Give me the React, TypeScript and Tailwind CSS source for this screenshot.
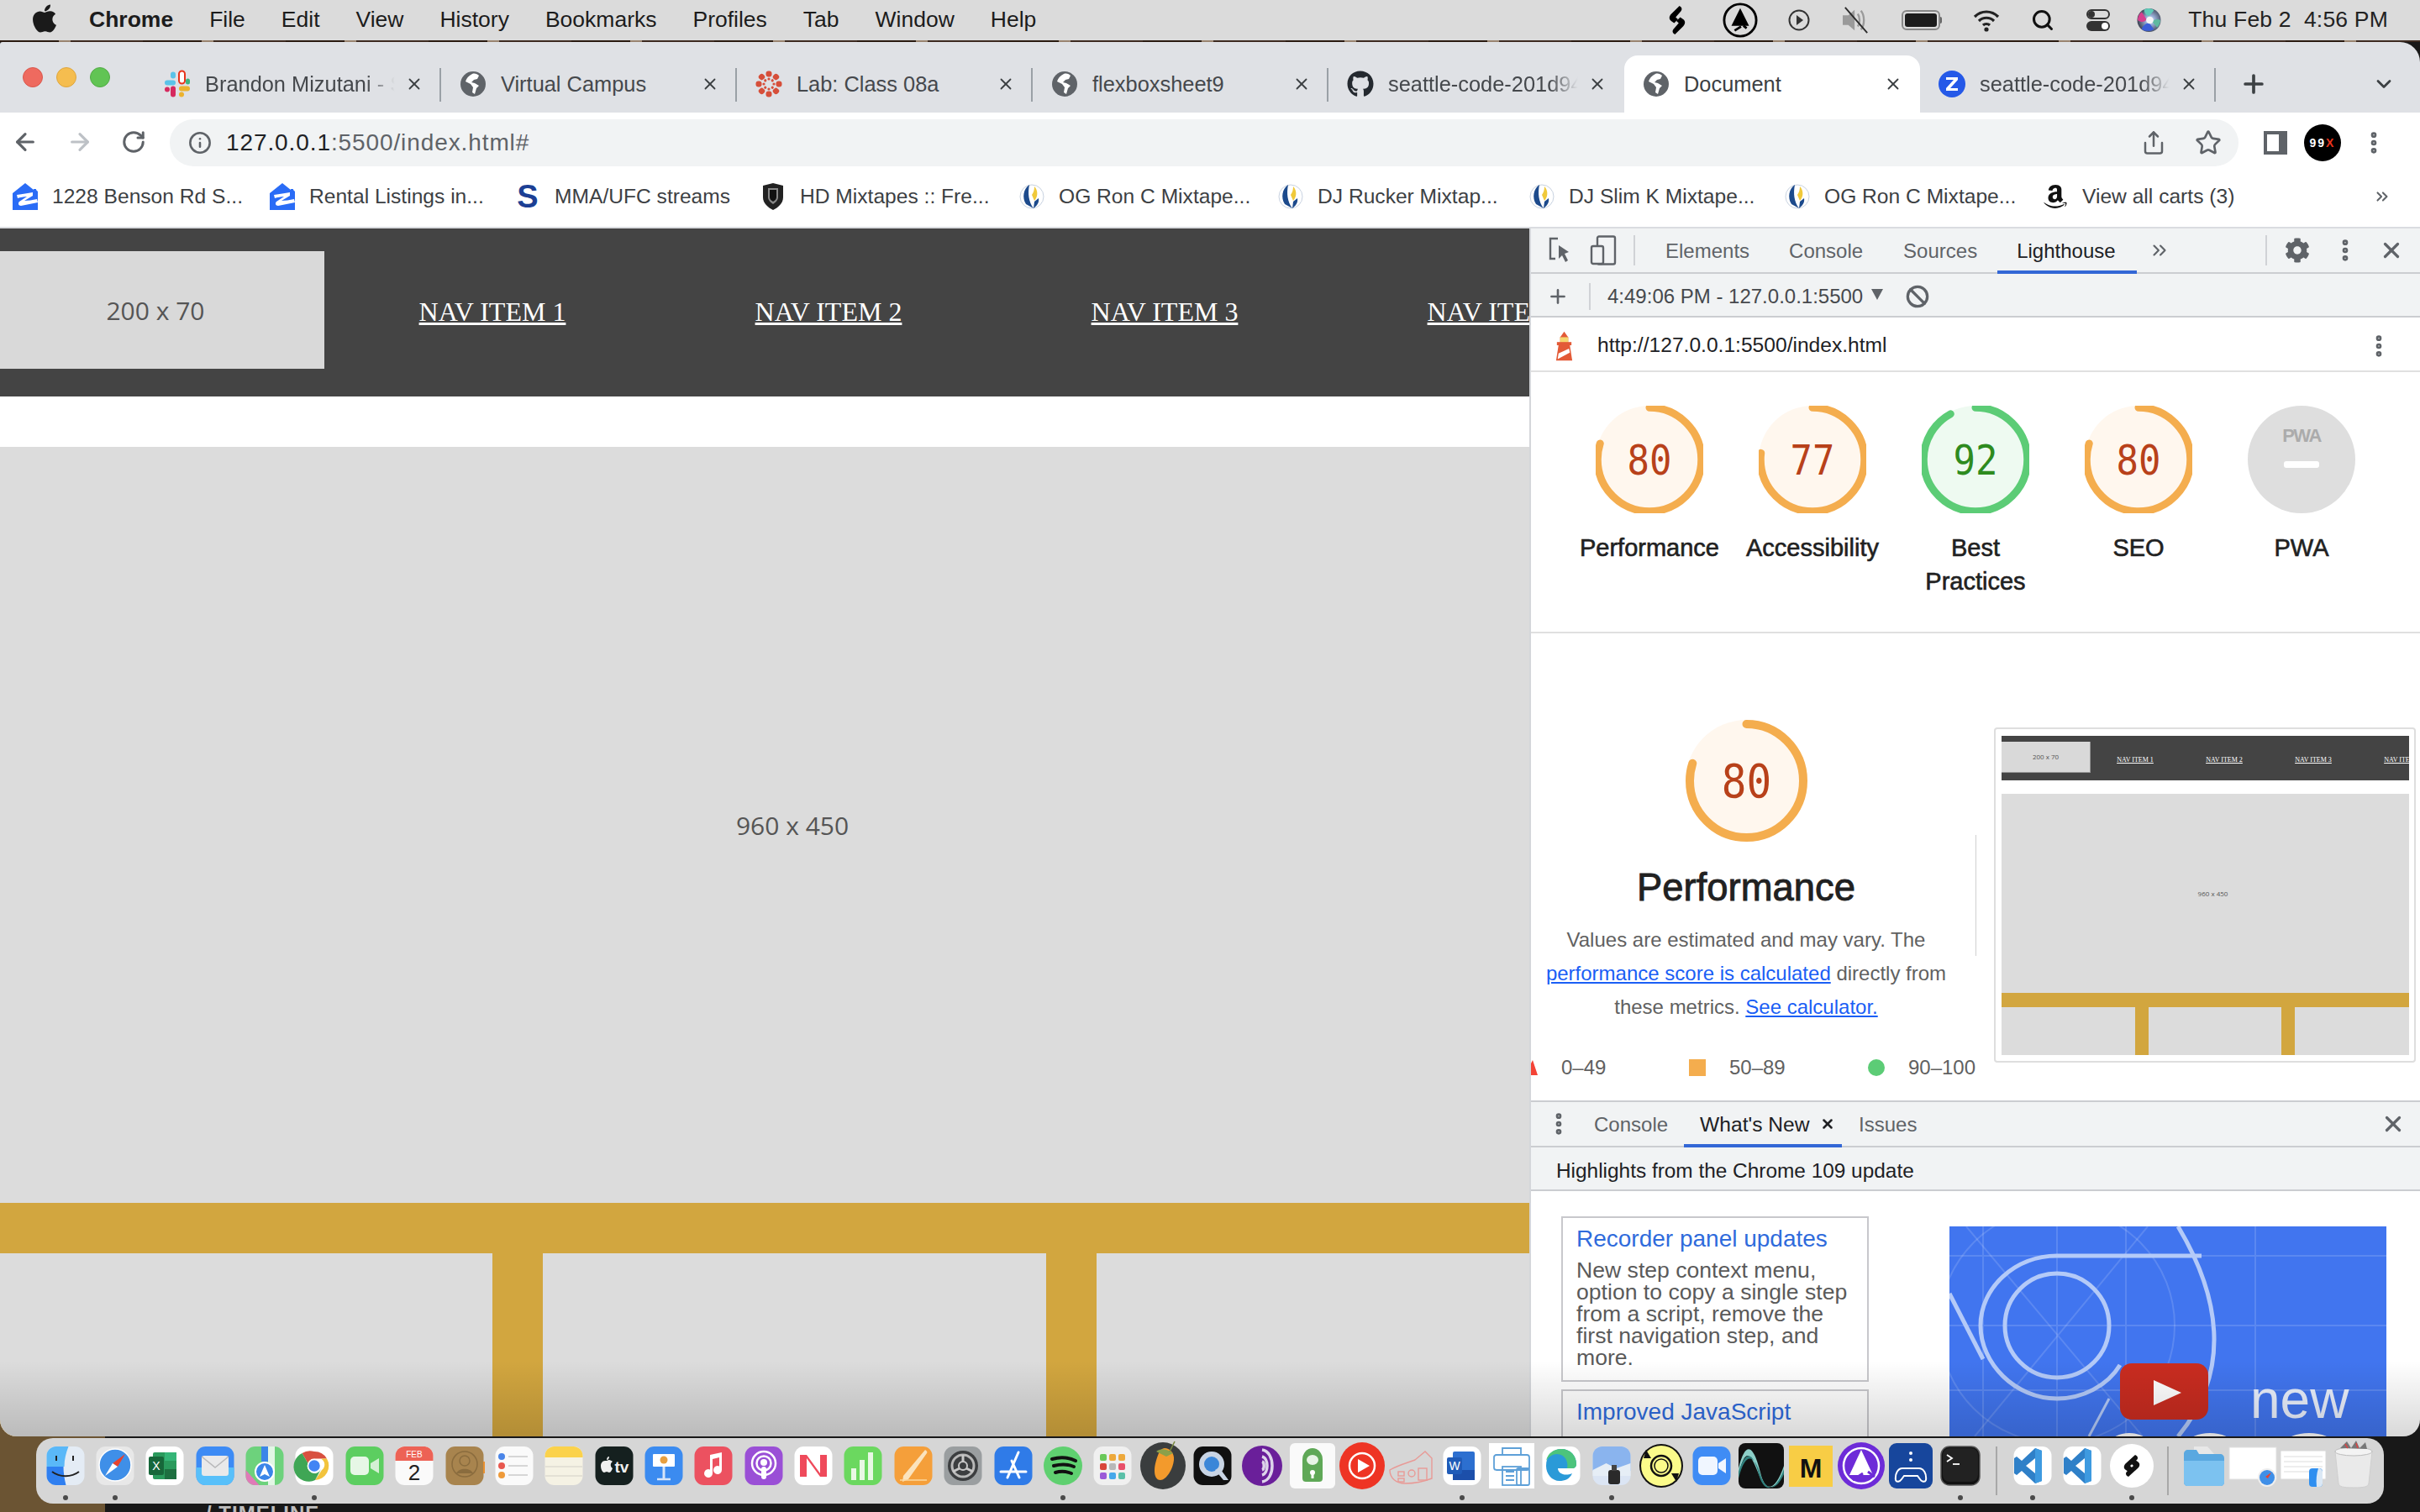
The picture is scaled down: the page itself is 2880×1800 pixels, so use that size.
import { ReactNode } from "react";
import { FaApple, FaGithub, FaAmazon, FaCog } from "react-icons/fa";
import { ArrowLeft, ArrowRight, RotateCw, Info, Share, Star, Search, X, Plus, ChevronDown, ChevronsRight, Ban, EllipsisVertical } from "lucide-react";

const sans = "font-['Liberation_Sans',Arial,sans-serif]";

function Globe() {
  return (
    <svg viewBox="0 0 32 32" className="w-[32px] h-[32px] shrink-0">
      <circle cx="16" cy="16" r="15" fill="#5f6368" />
      <path d="M15 4c-4 2-7 5-8 9l6 3 3 4-1 6 3 2 2-7 3-3-5-3-4-1 3-3 4-1 2-4c-2-2-5-3-8-2z" fill="#fff" />
    </svg>
  );
}

function Slack() {
  return (
    <svg viewBox="0 0 32 32" className="w-[32px] h-[33px] shrink-0">
      <rect x="1" y="12" width="13" height="6" rx="3" fill="#5bc3e8" />
      <rect x="8" y="2" width="6" height="8" rx="3" fill="#5bc3e8" />
      <rect x="18" y="1" width="7" height="15" rx="3.5" fill="#fff" stroke="#e8341c" strokeWidth="2" />
      <rect x="26" y="10" width="5" height="7" rx="2.5" fill="#3fb37f" />
      <rect x="1" y="20" width="6" height="6" rx="3" fill="#d62a5f" />
      <rect x="8" y="19" width="6" height="13" rx="3" fill="#d62a5f" />
      <rect x="18" y="19" width="13" height="6" rx="3" fill="#ecb22e" />
      <rect x="18" y="26" width="6" height="6" rx="3" fill="#ecb22e" />
    </svg>
  );
}

function CanvasIcon() {
  const dots = [0, 45, 90, 135, 180, 225, 270, 315];
  return (
    <svg viewBox="0 0 32 32" className="w-[32px] h-[32px] shrink-0">
      {dots.map((a) => (
        <g key={a} transform={`rotate(${a} 16 16)`}>
          <rect x="12.5" y="0.5" width="7" height="7" rx="3" fill="#d64f3a" />
          <circle cx="16" cy="10" r="1.6" fill="#d64f3a" />
        </g>
      ))}
    </svg>
  );
}

function ZoomFav() {
  return (
    <svg viewBox="0 0 32 32" className="w-[32px] h-[32px] shrink-0">
      <circle cx="16" cy="16" r="16" fill="#2559e8" />
      <path d="M9 8h14v3L14 21h9v3H9v-3l9-10H9z" fill="#fff" />
    </svg>
  );
}

function Zillow() {
  return (
    <svg viewBox="0 0 30 32" className="w-[30px] h-[32px]">
      <path d="M15 0l10 8v-1h3v1l2 2v22H0V12z" fill="#2a6cf6" />
      <path d="M5 14c7-1 13-2 19-3v4l-10 6c4 0 10-1 15-2l1 4-20 4c-3 0-4-3-2-5l9-6c-4 0-8 1-11 2z" fill="#fff" />
    </svg>
  );
}

function SBadge() {
  return <span className="w-[30px] text-center text-[38px] leading-none font-black text-[#1c3f94] font-['Liberation_Sans',sans-serif]">S</span>;
}

function Shield() {
  return (
    <svg viewBox="0 0 30 32" className="w-[30px] h-[32px]">
      <path d="M15 0l12 3v14c0 7-6 12-12 15C9 29 3 24 3 17V3z" fill="#222" />
      <path d="M9 6h12v11c0 3-3 6-6 8-3-2-6-5-6-8z" fill="#888" />
      <path d="M11 8h8v9c0 2-2 4-4 5-2-1-4-3-4-5z" fill="#111" />
    </svg>
  );
}

function Mixtape() {
  return (
    <svg viewBox="0 0 30 32" className="w-[30px] h-[32px]">
      <circle cx="15" cy="16" r="14" fill="#fff" stroke="#c8d2e0" />
      <path d="M12 2C5 7 3 17 8 25l9 5c-6-8-7-18-5-28z" fill="#1c4a8c" />
      <path d="M18 4c5 5 4 13 0 17l-3-7c2-3 3-6 3-10z" fill="#f0c93a" />
      <path d="M23 18c1 5-2 9-6 12l1-8z" fill="#1c4a8c" />
    </svg>
  );
}

const tabs: { icon: ReactNode; label: string; active?: boolean; fade?: boolean }[] = [
  { icon: <Slack />, label: "Brandon Mizutani - Slack", fade: true },
  { icon: <Globe />, label: "Virtual Campus" },
  { icon: <CanvasIcon />, label: "Lab: Class 08a" },
  { icon: <Globe />, label: "flexboxsheet9" },
  { icon: <FaGithub className="w-[32px] h-[32px] shrink-0 text-[#24292f]" />, label: "seattle-code-201d94-lab", fade: true },
  { icon: <Globe />, label: "Document", active: true },
  { icon: <ZoomFav />, label: "seattle-code-201d94-lab", fade: true },
];

const bookmarks: { icon: ReactNode; label: string; width: string }[] = [
  { icon: <Zillow />, label: "1228 Benson Rd S...", width: "w-[306px]" },
  { icon: <Zillow />, label: "Rental Listings in...", width: "w-[292px]" },
  { icon: <SBadge />, label: "MMA/UFC streams", width: "w-[292px]" },
  { icon: <Shield />, label: "HD Mixtapes :: Fre...", width: "w-[308px]" },
  { icon: <Mixtape />, label: "OG Ron C Mixtape...", width: "w-[308px]" },
  { icon: <Mixtape />, label: "DJ Rucker Mixtap...", width: "w-[299px]" },
  { icon: <Mixtape />, label: "DJ Slim K Mixtape...", width: "w-[304px]" },
  { icon: <Mixtape />, label: "OG Ron C Mixtape...", width: "w-[307px]" },
  { icon: <FaAmazon className="w-[30px] h-[32px] text-[#111]" />, label: "View all carts (3)", width: "w-[300px]" },
];

function MenuBar() {
  const items = ["File", "Edit", "View", "History", "Bookmarks", "Profiles", "Tab", "Window", "Help"];
  return (
    <div className={`h-[48px] bg-[#dbdbdb] flex items-center text-[26.5px] text-[#1c1c1c] ${sans}`}>
      <FaApple className="w-[34px] h-[38px] ml-[36px] mr-[36px] -mt-[4px] text-[#1a1a1a]" />
      <span className="font-bold mr-[43px]">Chrome</span>
      <div className="flex gap-[43px]">
        {items.map((m) => (
          <span key={m}>{m}</span>
        ))}
      </div>
      <div className="ml-auto flex items-center">
        <svg viewBox="0 0 30 40" className="w-[30px] h-[36px] mr-[39px]">
          <path d="M18 1L7 12c-3 3-3 7 0 9l4 3 5-5-3-3 7-8c2-3 1-5-2-7zM12 39l11-11c3-3 3-7 0-9l-4-3-5 5 3 3-7 8c-2 3-1 5 2 7z" fill="#000" />
        </svg>
        <svg viewBox="0 0 44 44" className="w-[42px] h-[42px] mr-[36px]">
          <circle cx="22" cy="22" r="20" fill="none" stroke="#000" strokeWidth="3" />
          <path d="M22 7l11 22H11z" fill="#000" />
          <path d="M15 35l8-5M30 32l-4-3" stroke="#000" strokeWidth="3" />
        </svg>
        <svg viewBox="0 0 26 26" className="w-[26px] h-[26px] mr-[36px]">
          <circle cx="13" cy="13" r="11.5" fill="none" stroke="#333" strokeWidth="2" />
          <path d="M10 7l8 6-8 6z" fill="#333" />
        </svg>
        <svg viewBox="0 0 40 34" className="w-[38px] h-[32px] mr-[35px]">
          <path d="M3 11h7l8-7v26l-8-7H3z" fill="#9a9a9a" />
          <path d="M22 9c3 4 3 12 0 16M26 5c5 6 5 18 0 24" fill="none" stroke="#9a9a9a" strokeWidth="2.5" />
          <path d="M6 1l28 32" stroke="#2a2a2a" strokeWidth="2" />
        </svg>
        <div className="flex items-center mr-[37px]">
          <div className="w-[46px] h-[24px] border-2 border-[#888] rounded-[6px] p-[2px] flex">
            <div className="flex-1 bg-[#1c1c1c] rounded-[3px]" />
          </div>
          <div className="w-[2px] h-[8px] bg-[#666] rounded-r-[2px]" />
        </div>
        <svg viewBox="0 0 32 28" className="w-[32px] h-[28px] mr-[37px]">
          <path d="M2 10c8-8 20-8 28 0M7 15c5-5 13-5 18 0M12 20c2-2 6-2 8 0" fill="none" stroke="#222" strokeWidth="3.2" />
          <circle cx="16" cy="25" r="2.6" fill="#222" />
        </svg>
        <Search className="w-[28px] h-[28px] mr-[38px] text-[#111]" strokeWidth={2.6} />
        <div className="w-[28px] h-[26px] flex flex-col gap-[2px] mr-[32px]">
          <div className="h-[12px] rounded-full border-2 border-[#333] flex"><div className="w-[8px] bg-[#333] rounded-full" /></div>
          <div className="h-[12px] rounded-full bg-[#333] flex justify-end"><div className="w-[8px] bg-white rounded-full m-[2px]" /></div>
        </div>
        <svg viewBox="0 0 30 30" className="w-[29px] h-[30px] mr-[32px]">
          <defs>
            <radialGradient id="siriA" cx="0.55" cy="0.5" r="0.55">
              <stop offset="0" stopColor="#f4f4f6" />
              <stop offset="0.35" stopColor="#9ab0d8" />
              <stop offset="1" stopColor="#3a4050" />
            </radialGradient>
          </defs>
          <circle cx="15" cy="15" r="14.5" fill="url(#siriA)" />
          <path d="M9 2c4-2 9-2 12 1l-6 7c-3-1-6-3-6-8z" fill="#5fcbb8" />
          <path d="M1 15c0-4 2-8 5-10l6 9c-2 4-7 4-11 1z" fill="#d4418e" />
          <path d="M6 26c4 3 11 3 15 0l-6-8c-4 1-8 4-9 8z" fill="#3a5ed8" />
          <path d="M29 15c0 4-2 7-4 9l-6-7c2-3 6-4 10-2z" fill="#5fb8a0" />
          <circle cx="16" cy="15" r="4.500" fill="#f4f4f6" />
        </svg>
        <span className="whitespace-pre mr-[38px] text-[#222] tracking-[0.2px]">Thu Feb 2  4:56 PM</span>
      </div>
    </div>
  );
}

function TabStrip() {
  return (
    <div className={`h-[84px] bg-[#dfe1e5] flex items-end relative ${sans}`}>
      <div className="absolute left-[27px] top-[30px] flex gap-[16px]">
        <div className="w-[24px] h-[24px] rounded-full bg-[#ee6a5f] border border-[#d9574d]" />
        <div className="w-[24px] h-[24px] rounded-full bg-[#f5bd4f] border border-[#dea63e]" />
        <div className="w-[24px] h-[24px] rounded-full bg-[#61c454] border border-[#52ab46]" />
      </div>
      <div className="flex pl-[173px]">
        {tabs.map((t, i) => {
          const noSep = t.active || tabs[i + 1]?.active;
          return (
            <div key={i} className={`w-[352px] h-[68px] flex items-center pl-[22px] pr-[21px] relative text-[25.4px] ${t.active ? "bg-white rounded-t-[16px] text-[#3c4043]" : "text-[#45484c]"}`}>
              <div className="flex items-center -mt-[1px]">{t.icon}</div>
              <span className={`ml-[17px] w-[228px] whitespace-nowrap overflow-hidden ${t.fade ? "[mask-image:linear-gradient(to_right,black_84%,transparent_99%)]" : ""}`}>{t.label}</span>
              <X className="ml-auto w-[22px] h-[22px] text-[#3c4043] shrink-0" strokeWidth={2} />
              {!noSep && <div className="absolute right-0 top-[15px] h-[40px] w-[2px] bg-[#9aa0a6]" />}
            </div>
          );
        })}
      </div>
      <div className="h-[68px] flex items-center text-[#3c4043] ml-[28px]">
        <Plus className="w-[34px] h-[34px]" strokeWidth={2.6} />
        <ChevronDown className="w-[28px] h-[28px] ml-[124px]" strokeWidth={2.4} />
      </div>
    </div>
  );
}

function Toolbar() {
  return (
    <div className={`h-[64px] bg-white flex items-start ${sans}`}>
      <div className="h-[64px] flex items-center pt-[6px] text-[#5f6368]">
        <ArrowLeft className="w-[32px] h-[32px] ml-[14px]" strokeWidth={2.4} />
        <ArrowRight className="w-[32px] h-[32px] ml-[33px] text-[#bdc1c6]" strokeWidth={2.4} />
        <RotateCw className="w-[30px] h-[30px] ml-[33px]" strokeWidth={2.4} />
      </div>
      <div className="mt-[8px] ml-[28px] w-[2462px] h-[56px] rounded-full bg-[#f1f3f4] flex items-center">
        <Info className="w-[28px] h-[28px] ml-[22px] text-[#5f6368]" strokeWidth={2.2} />
        <span className="ml-[17px] text-[28px] tracking-[0.9px] text-[#5f6368]">
          <span className="text-[#202124]">127.0.0.1</span>:5500/index.html#
        </span>
        <Share className="w-[30px] h-[32px] ml-auto mr-[34px] text-[#5f6368]" strokeWidth={2} />
        <Star className="w-[32px] h-[32px] mr-[20px] text-[#5f6368]" strokeWidth={2} />
      </div>
      <div className="h-[64px] flex items-center pt-[8px]">
        <div className="ml-[30px] w-[28px] h-[28px] border-[4px] border-[#5f6368] border-r-[10px]" />
        <div className="ml-[20px] w-[44px] h-[44px] rounded-full bg-black flex items-center justify-center text-[14px] font-bold text-white tracking-[2px]">
          99<span className="text-[#e8341c]">X</span>
        </div>
        <EllipsisVertical className="w-[32px] h-[32px] ml-[23px] text-[#5f6368]" strokeWidth={3} />
      </div>
    </div>
  );
}

function BookmarkBar() {
  return (
    <div className={`h-[74px] bg-white border-b-2 border-[#dadce0] flex items-center pl-[15px] text-[24.6px] text-[#3c4043] ${sans}`}>
      {bookmarks.map((b, i) => (
        <div key={i} className={`flex items-center gap-[17px] shrink-0 ${b.width}`}>
          {b.icon}
          <span className="whitespace-nowrap">{b.label}</span>
        </div>
      ))}
      <ChevronsRight className="w-[22px] h-[22px] ml-[93px] text-[#5f6368]" strokeWidth={2.2} />
    </div>
  );
}

function PageMock() {
  return (
    <div className="w-[1820px] shrink-0 overflow-hidden bg-white flex flex-col">
      <div className="h-[200px] bg-[#444444] flex items-center pb-[6px] shrink-0">
        <div className="w-[386px] h-[140px] shrink-0 bg-[#d9d9d9] flex items-center justify-center pr-[16px] text-[30px] text-[#555] font-['Open_Sans',sans-serif]">200 x 70</div>
        {["NAV ITEM 1", "NAV ITEM 2", "NAV ITEM 3", "NAV ITEM 4"].map((n) => (
          <div key={n} className="w-[400px] shrink-0 text-center pt-[4px]">
            <a className="text-[32px] text-white underline font-['Liberation_Serif',serif]">{n}</a>
          </div>
        ))}
      </div>
      <div className="h-[60px] shrink-0" />
      <div className="h-[900px] shrink-0 bg-[#dcdcdc] flex items-center justify-center pl-[66px] text-[30px] text-[#555] font-['Open_Sans',sans-serif]">960 x 450</div>
      <div className="h-[60px] shrink-0 bg-[#d2a63f]" />
      <div className="flex-1 flex bg-[#d2a63f] gap-[60px]">
        <div className="w-[586px] bg-[#dcdcdc]" />
        <div className="w-[599px] bg-[#dcdcdc]" />
        <div className="flex-1 bg-[#dcdcdc]" />
      </div>
    </div>
  );
}

function Gauge({ score, size, r, sw, text, color, fill, ink }: { score: number; size: number; r: number; sw: number; text: number; color: string; fill: string; ink: string }) {
  const c = size / 2;
  return (
    <svg width={size} height={size} viewBox={`0 0 ${size} ${size}`} className="block">
      <circle cx={c} cy={c} r={c} fill={fill} />
      <circle cx={c} cy={c} r={r} fill="none" stroke={color} strokeWidth={sw} strokeLinecap="round" pathLength={100} strokeDasharray={`${score} 100`} transform={`rotate(-90 ${c} ${c})`} />
      <text x={c} y={c + text * 0.36} textAnchor="middle" fontSize={text} textLength={text * 1.08} lengthAdjust="spacingAndGlyphs" fontFamily="'DejaVu Sans Mono', monospace" fill={ink}>{score}</text>
    </svg>
  );
}

const scores = [
  { score: 80, label: ["Performance"] },
  { score: 77, label: ["Accessibility"] },
  { score: 92, label: ["Best", "Practices"] },
  { score: 80, label: ["SEO"] },
];

function orange(score: number) {
  return score >= 90 ? { color: "#5ccc76", fill: "#eefaf1", ink: "#2e8b1f" } : { color: "#f4ad4e", fill: "#fff7ee", ink: "#b8411a" };
}

function LighthouseIcon() {
  return (
    <svg viewBox="0 0 26 36" className="w-[25px] h-[36px]">
      <path d="M13 0l5 7v6H8V7z" fill="#e35a37" />
      <rect x="8" y="7" width="10" height="7" fill="#f5d76e" />
      <rect x="4" y="13" width="18" height="4" fill="#e35a37" />
      <path d="M6 17h14l3 19H3z" fill="#e35a37" />
      <path d="M6 27l13-6 1 5-15 8z" fill="#fff" />
    </svg>
  );
}

function ThumbMock() {
  return (
    <div className="w-[485px] h-[380px] overflow-hidden flex flex-col bg-white">
      <div className="h-[53px] shrink-0 bg-[#444] flex items-center pb-[2px] overflow-hidden">
        <div className="w-[106px] h-[37px] shrink-0 bg-[#d9d9d9] border-r border-b border-[#999] flex items-center justify-center text-[8px] text-[#555] font-['Open_Sans',sans-serif]">200 x 70</div>
        {["NAV ITEM 1", "NAV ITEM 2", "NAV ITEM 3", "NAV ITEM 4"].map((n) => (
          <div key={n} className="w-[106px] shrink-0 text-center">
            <span className="text-[8px] text-white underline whitespace-nowrap font-['Liberation_Serif',serif]">{n}</span>
          </div>
        ))}
      </div>
      <div className="h-[16px] shrink-0" />
      <div className="h-[237px] shrink-0 bg-[#dcdcdc] flex items-center justify-center pl-[18px] text-[8px] text-[#555] font-['Open_Sans',sans-serif]">960 x 450</div>
      <div className="h-[17px] shrink-0 bg-[#d2a63f]" />
      <div className="flex-1 flex gap-[16px] bg-[#d2a63f]">
        <div className="w-[159px] bg-[#dcdcdc]" />
        <div className="w-[158px] bg-[#dcdcdc]" />
        <div className="flex-1 bg-[#dcdcdc]" />
      </div>
    </div>
  );
}

function VideoThumb() {
  return (
    <svg viewBox="0 0 520 250" className="w-[520px] h-[250px] block shrink-0 ml-[96px] mt-[12px]">
      <rect width="520" height="250" fill="#4175ef" />
      <g stroke="#ffffff" strokeOpacity="0.14" strokeWidth="2" fill="none">
        <path d="M0 35h520M0 118h520M0 195h520M40 0v250M128 0v250M210 0v250M364 0v250" />
        <circle cx="128" cy="118" r="140" />
        <path d="M20 0l210 250M236 0L30 250" />
      </g>
      <g stroke="#b4caf8" strokeWidth="5" fill="none">
        <circle cx="128" cy="118" r="62" />
        <path d="M300 35H128c-50 0-91 38-91 83s41 87 91 87c30 0 60-15 75-40" />
        <path d="M272 0c48 80 66 170 0 250" />
        <path d="M0 80l40 78" />
        <path d="M190 205l-24 45" strokeWidth="3" />
      </g>
      <rect x="203" y="163" width="105" height="67" rx="14" fill="#c92c20" />
      <path d="M243 183l33 15-33 15z" fill="#fff" />
      <text x="358" y="228" fontSize="64" fill="#eaf0fd" fontFamily="'Liberation Sans', sans-serif">new</text>
      <ellipse cx="214" cy="258" rx="22" ry="12" fill="#fff" />
      <ellipse cx="310" cy="258" rx="26" ry="12" fill="#fff" />
      <ellipse cx="428" cy="258" rx="28" ry="12" fill="#fff" />
    </svg>
  );
}

function DevTools() {
  const perf = orange(80);
  return (
    <div className={`flex-1 border-l-2 border-[#d4d6da] bg-white flex flex-col overflow-hidden ${sans}`}>
      <div className="h-[54px] shrink-0 bg-[#f1f3f4] border-b-2 border-[#cbcdd1] flex items-center text-[24px] text-[#5f6368]">
        <svg viewBox="0 0 28 32" className="w-[28px] h-[32px] ml-[20px]">
          <path d="M12 2H3v24h6" fill="none" stroke="#5f6368" strokeWidth="2.4" />
          <path d="M13 10l12 8-5 2 4 8-3 2-4-8-4 4z" fill="#5f6368" />
        </svg>
        <svg viewBox="0 0 32 36" className="w-[32px] h-[36px] ml-[22px]">
          <rect x="9" y="1.5" width="21" height="33" rx="2" fill="none" stroke="#5f6368" strokeWidth="2.4" />
          <rect x="2" y="13" width="14" height="21" rx="2" fill="#f1f3f4" stroke="#5f6368" strokeWidth="2.4" />
        </svg>
        <div className="w-[2px] h-[36px] bg-[#d0d2d6] ml-[20px]" />
        <span className="ml-[36px] pt-[2px]">Elements</span>
        <span className="ml-[47px] pt-[2px]">Console</span>
        <span className="ml-[48px] pt-[2px]">Sources</span>
        <div className="ml-[24px] h-full px-[23px] pt-[2px] flex items-center relative text-[#202124] w-[166px]">
          Lighthouse
          <div className="absolute left-0 right-0 -bottom-[2px] h-[4px] bg-[#3367d6]" />
        </div>
        <ChevronsRight className="w-[26px] h-[26px] ml-[14px]" strokeWidth={2} />
        <div className="w-[2px] h-[36px] bg-[#d0d2d6] ml-[113px]" />
        <FaCog className="w-[30px] h-[32px] ml-[21px] text-[#5f6368]" />
        <EllipsisVertical className="w-[32px] h-[32px] ml-[26px]" strokeWidth={3} />
        <X className="w-[30px] h-[30px] ml-[24px]" strokeWidth={2.6} />
      </div>
      <div className="h-[52px] shrink-0 bg-[#f1f3f4] border-b-2 border-[#cbcdd1] flex items-center pt-[4px] text-[24px] text-[#5f6368]">
        <Plus className="w-[26px] h-[26px] ml-[19px]" strokeWidth={2.4} />
        <div className="w-[2px] h-[32px] bg-[#d0d2d6] ml-[24px]" />
        <span className="ml-[20px] text-[#46494d]">4:49:06 PM - 127.0.0.1:5500</span>
        <svg viewBox="0 0 14 14" className="w-[14px] h-[14px] ml-[10px] -mt-[6px]"><path d="M0 1h14L7 14z" fill="#5f6368" /></svg>
        <Ban className="w-[28px] h-[28px] ml-[27px]" strokeWidth={2.8} />
      </div>
      <div className="h-[65px] shrink-0 border-b-2 border-[#e0e0e0] flex items-center pt-[4px] text-[24.6px] text-[#202124]">
        <div className="ml-[27px] mr-[27px] flex"><LighthouseIcon /></div>
        <span>http://127.0.0.1:5500/index.html</span>
        <EllipsisVertical className="w-[32px] h-[32px] ml-auto mr-[33px] text-[#5f6368]" strokeWidth={3} />
      </div>
      <div className="h-[311px] shrink-0 border-b-2 border-[#e0e0e0] flex pl-[44px] pt-[40px]">
        {scores.map((s) => {
          const g = orange(s.score);
          return (
            <div key={s.label[0]} className="w-[194px] flex flex-col items-center">
              <Gauge score={s.score} size={128} r={123.5 / 2} sw={9} text={49} {...g} />
              <div className="mt-[21px] text-[29px] leading-[40px] text-[#212121] text-center [-webkit-text-stroke:0.6px_#212121]">
                {s.label.map((l) => (
                  <div key={l}>{l}</div>
                ))}
              </div>
            </div>
          );
        })}
        <div className="w-[194px] flex flex-col items-center">
          <div className="w-[128px] h-[128px] rounded-full bg-[#dedede] flex flex-col items-center pt-[22px]">
            <span className="text-[22px] leading-[28px] font-bold text-[#ababab] tracking-[-1.5px]">PWA</span>
            <div className="w-[42px] h-[8px] rounded-[3px] bg-white mt-[16px]" />
          </div>
          <div className="mt-[21px] text-[29px] leading-[40px] text-[#212121] [-webkit-text-stroke:0.6px_#212121]">PWA</div>
        </div>
      </div>
      <div className="h-[556px] shrink-0 flex">
        <div className="w-[529px] flex flex-col">
          <div className="w-[512px] flex flex-col items-center pt-[103px]">
            <Gauge score={80} size={145} r={67.5} sw={10} text={55} {...perf} />
            <div className="mt-[27px] text-[45.4px] leading-[56px] text-[#212121] [-webkit-text-stroke:0.9px_#212121]">Performance</div>
            <div className="mt-[14px] w-[500px] text-center text-[24px] leading-[40px] text-[#616161]">
              Values are estimated and may vary. The <a className="text-[#1a5ef5] underline">performance score is calculated</a> directly from these metrics. <a className="text-[#1a5ef5] underline">See calculator.</a>
            </div>
          </div>
          <div className="mt-[32px] h-[40px] flex items-center text-[24px] text-[#616161]">
            <svg viewBox="0 0 8 18" className="w-[8px] h-[18px]"><path d="M0 4l2-4 6 18H0z" fill="#f44336" /></svg>
            <span className="ml-[28px] w-[152px]">0–49</span>
            <div className="w-[20px] h-[20px] bg-[#f4ad4e]" />
            <span className="ml-[28px] w-[165px]">50–89</span>
            <div className="w-[20px] h-[20px] rounded-full bg-[#5ccc76]" />
            <span className="ml-[28px]">90–100</span>
          </div>
        </div>
        <div className="w-[1px] h-[144px] mt-[240px] bg-[#d0d0d0] shrink-0" />
        <div className="ml-[21px] mt-[112px] w-[502px] h-[399px] border-2 border-[#dedede] rounded-[4px] pt-[8px] pl-[7px]">
          <ThumbMock />
        </div>
      </div>
      <div className="h-[400px] shrink-0 border-t-2 border-[#cbcdd1] flex flex-col">
        <div className="h-[54px] shrink-0 bg-[#f1f3f4] border-b-2 border-[#cbcdd1] flex items-center text-[24px] text-[#5f6368]">
          <EllipsisVertical className="w-[32px] h-[32px] ml-[17px]" strokeWidth={3} />
          <span className="ml-[26px] pt-[2px]">Console</span>
          <div className="ml-[19px] h-full w-[188px] pl-[19px] pt-[2px] flex items-center relative text-[#202124] text-[24.6px]">
            What's New
            <X className="w-[18px] h-[18px] ml-[12px] -mt-[2px]" strokeWidth={3.4} />
            <div className="absolute left-0 right-0 -bottom-[2px] h-[4px] bg-[#3367d6]" />
          </div>
          <span className="ml-[20px] pt-[2px]">Issues</span>
          <X className="w-[30px] h-[30px] ml-auto mr-[17px]" strokeWidth={2.6} />
        </div>
        <div className="h-[52px] shrink-0 bg-[#f1f3f4] border-b-2 border-[#cbcdd1] flex items-center pl-[30px] pt-[6px] text-[24.4px] text-[#202124]">Highlights from the Chrome 109 update</div>
        <div className="flex-1 flex overflow-hidden pl-[36px] pt-[30px]">
          <div className="w-[366px] shrink-0 flex flex-col gap-[9px]">
            <div className="h-[197px] shrink-0 border-2 border-[#c8c8cc] pl-[16px] pt-[7px]">
              <div className="text-[28px] leading-[36px] text-[#2f6bdc] whitespace-nowrap">Recorder panel updates</div>
              <div className="text-[26.6px] leading-[26px] text-[#5a5a5a] mt-[6px] whitespace-nowrap">
                New step context menu,<br />option to copy a single step<br />from a script, remove the<br />first navigation step, and<br />more.
              </div>
            </div>
            <div className="h-[100px] shrink-0 border-2 border-[#c8c8cc] pl-[16px] pt-[7px]">
              <div className="text-[28px] leading-[36px] text-[#2f6bdc]">Improved JavaScript</div>
            </div>
          </div>
          <VideoThumb />
        </div>
      </div>
    </div>
  );
}

function Tile({ fill, children }: { fill: string; children?: ReactNode }) {
  return (
    <svg viewBox="0 0 60 66" className="w-full h-full">
      <rect x="7.5" y="10" width="45" height="46" rx="11" fill={fill} />
      {children}
    </svg>
  );
}

function Free({ children }: { children: ReactNode }) {
  return (
    <svg viewBox="0 0 60 66" className="w-full h-full">
      {children}
    </svg>
  );
}

const vscode = (
  <Tile fill="#fff">
    <path d="M41 15v36l-8 3-16-15-6 5-3-2V24l3-2 6 5 16-15z" fill="#2f80c8" />
    <path d="M33 24L22 33l11 9z" fill="#fff" />
    <path d="M33 12l8 3v36l-8 3z" fill="#3e9ae0" />
  </Tile>
);

const snippets = (
  <path d="M34 20l-11 10c-3 3-3 6 0 8l3 2 5-4-3-3 8-7c2-2 1-5-2-6zM26 46l11-10c3-3 3-6 0-8l-3-2-5 4 3 3-8 7c-2 2-1 5 2 6z" fill="#111" />
);

const dockIcons: { node: ReactNode; dot?: boolean; sep?: boolean }[] = [
  { dot: true, node: <Tile fill="#e4ecf5"><path d="M18.5 10h15c-3 8-5 15-5 24h-21V21c0-6 5-11 11-11z" fill="#5ab8f8" /><path d="M7.5 34h20c0 7 1 14 3 22H18.5c-6 0-11-5-11-11z" fill="#2f7ff0" /><path d="M19 21v6M39 21v6" stroke="#222" strokeWidth="2" /><path d="M14 40c9 7 23 7 32 0" fill="none" stroke="#222" strokeWidth="2" /></Tile> },
  { dot: true, node: <Tile fill="#e8e8e8"><circle cx="30" cy="32" r="19" fill="#3f8fe8" stroke="#fff" strokeWidth="1.5" /><path d="M42 19L27 30l6 4z" fill="#e8432e" /><path d="M18 45l15-11-6-4z" fill="#fff" /></Tile> },
  { node: <Tile fill="#fff"><rect x="16" y="17" width="28" height="32" rx="2" fill="#2a9a5c" /><rect x="30" y="17" width="14" height="10" fill="#35b577" /><rect x="30" y="37" width="14" height="12" fill="#1d6f40" /><rect x="11" y="22" width="18" height="22" rx="2" fill="#17673a" /><text x="20" y="38" fontSize="14" textAnchor="middle" fill="#fff" fontFamily="'Liberation Sans'">X</text></Tile> },
  { node: <Tile fill="#3d8bf5"><path d="M7.5 35h45v10c0 6-5 11-11 11h-23c-6 0-11-5-11-11z" fill="#58c0fa" /><rect x="14" y="21" width="32" height="24" rx="3" fill="#e9e9ea" /><path d="M14 22l16 13 16-13" fill="none" stroke="#b8b8ba" strokeWidth="1.5" /></Tile> },
  { node: <Tile fill="#6dd27c"><path d="M34 10h8v46h-8z" fill="#fff" opacity="0.8" /><path d="M7.5 38l16 18h-5c-6 0-11-5-11-11z" fill="#e07ab8" /><path d="M34 10h-8v18h8z" fill="#3a86e8" /><circle cx="30" cy="40" r="11" fill="#3a86e8" stroke="#fff" strokeWidth="2" /><path d="M30 32l6 14-6-3-6 3z" fill="#fff" /></Tile> },
  { dot: true, node: <Tile fill="#fff"><path d="M30 16a17 17 0 0 1 15 8.500H30a8 8 0 0 0-7.500 5.500l-7-12A17 17 0 0 1 30 16z" fill="#d8503f" /><path d="M45 24.500A17 17 0 0 1 31 50l8-12a8 8 0 0 0-1-13.500z" fill="#f2c33c" /><path d="M15.500 18A17 17 0 0 0 31 50l7-13a8 8 0 0 1-15.500-7z" fill="#3fa655" /><circle cx="30" cy="33" r="7.500" fill="#4285f4" stroke="#fff" strokeWidth="1.5" /></Tile> },
  { node: <Tile fill="#5cce60"><rect x="13" y="22" width="22" height="22" rx="5" fill="#e6f7e6" /><path d="M37 30l10-6v18l-10-6z" fill="#d4f0d4" /></Tile> },
  { node: <Tile fill="#fafafa"><path d="M7.500 27V21c0-6 5-11 11-11h23c6 0 11 5 11 11v6z" fill="#ed6255" /><text x="30" y="23" fontSize="10" textAnchor="middle" fill="#fff" fontFamily="'Liberation Sans'">FEB</text><text x="30" y="50" fontSize="26" textAnchor="middle" fill="#222" fontFamily="'Liberation Sans'">2</text></Tile> },
  { node: <Tile fill="#a8844e"><circle cx="30" cy="31" r="15" fill="none" stroke="#8a6c3e" strokeWidth="1.5" /><circle cx="30" cy="27" r="6" fill="none" stroke="#8a6c3e" strokeWidth="1.5" /><path d="M20 42c3-7 17-7 20 0" fill="#8a6c3e" /><rect x="52" y="28" width="2" height="14" fill="#e89030" /></Tile> },
  { node: <Tile fill="#fafafa"><circle cx="15" cy="22" r="4" fill="#4a85e8" /><circle cx="15" cy="33" r="4" fill="#e8584f" /><circle cx="15" cy="44" r="4" fill="#ee9a3a" /><path d="M23 22h23M23 33h23M23 44h23" stroke="#d6d6d6" strokeWidth="2" /></Tile> },
  { node: <Tile fill="#f5f2e4"><path d="M7.500 23v-2c0-6 5-11 11-11h23c6 0 11 5 11 11v2z" fill="#fbd24b" /><path d="M8 34h44M8 45h44" stroke="#dedbcf" strokeWidth="1.5" /></Tile> },
  { node: <Tile fill="#15201f"><path d="M19 27c-3 0-5 3-5 6 0 4 2 8 4 8 1 0 2-1 3-1s2 1 3 1c2 0 3-3 4-5-3-2-3-6 0-8-1-1-3-2-4-2-2 0-2 1-3 1s-1-0-2 0zM21 26c0-2 1-4 3-4 0 2-1 4-3 4z" fill="#f0f0f0" /><text x="39" y="41" fontSize="19" textAnchor="middle" fill="#f0f0f0" fontFamily="'Liberation Sans'" fontWeight="bold">tv</text></Tile> },
  { node: <Tile fill="#3b8bf0"><rect x="17" y="19" width="26" height="15" rx="1" fill="#fff" /><circle cx="30" cy="26" r="4.500" fill="#e8a040" /><path d="M28.500 34h3v14h-3z" fill="#d6e4f8" /><path d="M22 49h16" stroke="#d6e4f8" strokeWidth="2.500" /></Tile> },
  { node: <Tile fill="#ec5160"><path d="M26 20l14-3v21a5 5 0 1 1-3-4.500V23l-8 2v17a5 5 0 1 1-3-4.500z" fill="#fff" /></Tile> },
  { node: <Tile fill="#9a4fd6"><circle cx="30" cy="30" r="14" fill="none" stroke="#fff" strokeWidth="2.500" /><circle cx="30" cy="30" r="8.500" fill="none" stroke="#fff" strokeWidth="2.500" /><circle cx="30" cy="29" r="4" fill="#fff" /><rect x="27" y="34" width="6" height="15" rx="3" fill="#fff" /></Tile> },
  { node: <Tile fill="#fff"><path d="M14 20h8l16 22V20h8v26h-8L22 24v22h-8z" fill="#ef4a5b" /></Tile> },
  { node: <Tile fill="#6bd85f"><rect x="16" y="36" width="6" height="14" fill="#e8f8e4" /><rect x="26" y="26" width="6" height="24" fill="#e8f8e4" /><rect x="36" y="17" width="6" height="33" fill="#e8f8e4" /></Tile> },
  { node: <Tile fill="#f59f3a"><path d="M44 14c2 1 3 3 2 4L24 49l-7 3 1-7z" fill="#fbe3bd" /><path d="M14 50h32" stroke="#fbd9a0" strokeWidth="1.500" /></Tile> },
  { node: <Tile fill="#9a9ea0"><circle cx="30" cy="33" r="18" fill="#3c3e40" /><circle cx="30" cy="33" r="13" fill="none" stroke="#b8b8b8" strokeWidth="3" /><circle cx="30" cy="33" r="5" fill="none" stroke="#c8c8c8" strokeWidth="2" /><path d="M30 20v8M18 40l8-4M42 40l-8-4" stroke="#c8c8c8" strokeWidth="3" /></Tile> },
  { node: <Tile fill="#2f7be8"><path d="M23 47l13-30M37 47L28 27M15 40h30" stroke="#fff" strokeWidth="3" strokeLinecap="round" /></Tile> },
  { dot: true, node: <Free><ellipse cx="30" cy="33" rx="23" ry="23" fill="#5fd070" /><path d="M17 25c10-3 20-2 28 2M19 33c8-2 17-2 24 1M21 41c7-2 14-1 19 1" fill="none" stroke="#111" strokeWidth="4" strokeLinecap="round" /></Free> },
  { node: <Tile fill="#f0f0f0"><rect x="15" y="19" width="8" height="8" rx="2" fill="#6ac85a" /><rect x="26" y="19" width="8" height="8" rx="2" fill="#eda93c" /><rect x="37" y="19" width="8" height="8" rx="2" fill="#eda93c" /><rect x="15" y="30" width="8" height="8" rx="2" fill="#d8453a" /><rect x="26" y="30" width="8" height="8" rx="2" fill="#b8b8b8" /><rect x="37" y="30" width="8" height="8" rx="2" fill="#e8506a" /><rect x="15" y="41" width="8" height="8" rx="2" fill="#9a5ad8" /><rect x="26" y="41" width="8" height="8" rx="2" fill="#46a8ea" /><rect x="37" y="41" width="8" height="8" rx="2" fill="#5ac0a8" /></Tile> },
  { node: <Free><ellipse cx="30" cy="33" rx="27" ry="28" fill="#3a3d3e" /><path d="M32 12c6 0 12 6 11 14-1 11-9 24-16 24-5 0-7-5-7-11 0-8 3-16 5-21 2-4 4-6 7-6z" fill="#f39a2c" /><path d="M22 16c5-4 12-4 20 2l-8 4z" fill="#8ca04a" /><path d="M38 16l6-12" stroke="#7a8a40" strokeWidth="1.500" /></Free> },
  { node: <Tile fill="#101010"><circle cx="29" cy="31" r="15" fill="#c8d4e4" /><circle cx="29" cy="31" r="9" fill="#3a86d8" /><path d="M33 38l10 12h6L38 35z" fill="#c8d4e4" /></Tile> },
  { node: <Free><ellipse cx="30" cy="33" rx="24" ry="24" fill="#6a1f9a" /><path d="M30 14c16 2 16 36 0 38M30 22c8 2 8 20 0 22M30 28c3 1 3 9 0 10" fill="none" stroke="#ddd4ea" strokeWidth="3.500" /></Free> },
  { node: <Free><rect x="3" y="6" width="54" height="54" rx="6" fill="#fafafa" /><path d="M18 26a12 14 0 0 1 24 0v22c0 3-2 4-4 4H22c-2 0-4-1-4-4z" fill="#5fa857" /><ellipse cx="30" cy="26" rx="7" ry="6" fill="#e8f4e6" /><circle cx="30" cy="41" r="3" fill="#fff" /><rect x="28.500" y="41" width="3" height="7" fill="#fff" /></Free> },
  { node: <Free><ellipse cx="30" cy="33" rx="27" ry="28" fill="#ee3424" /><circle cx="30" cy="33" r="15" fill="none" stroke="#fff" strokeWidth="2.500" /><path d="M25 25l14 8-14 8z" fill="#fff" /></Free> },
  { node: <Free><g fill="none" stroke="#e89a96" strokeWidth="1.400"><path d="M4 38c8-5 22-9 30-12l12-10 8 8v24c-10 4-20 6-32 6-10 0-18-6-18-16z" /><rect x="14" y="40" width="7" height="5" /><rect x="14" y="48" width="7" height="4" /><circle cx="30" cy="42" r="4" /><rect x="38" y="36" width="10" height="14" /></g></Free> },
  { dot: true, node: <Tile fill="#fff"><rect x="19" y="16" width="26" height="34" rx="2" fill="#2c6fd0" /><rect x="19" y="38" width="26" height="12" fill="#1c4faa" /><rect x="12" y="23" width="18" height="20" rx="2" fill="#1f5bb8" /><text x="21" y="38" fontSize="14" textAnchor="middle" fill="#fff" fontFamily="'Liberation Sans'">W</text></Tile> },
  { node: <Free><rect x="3" y="6" width="54" height="54" fill="#fff" /><g fill="none" stroke="#5ea0d8" strokeWidth="1.800"><path d="M19 20v-8h22v8" /><rect x="9" y="20" width="42" height="18" rx="3" /><rect x="19" y="34" width="22" height="22" /><rect x="36" y="36" width="15" height="20" rx="2" /><path d="M23 40h10M23 45h10M23 50h10" /></g></Free> },
  { node: <Tile fill="#fff"><path d="M30 13c11 0 18 8 18 18 0 3-2 5-5 5H26c0 6 8 10 17 6-3 7-9 9-15 9-9 0-16-8-16-18 0-12 8-20 18-20z" fill="#2a9ad8" /><path d="M30 13c11 0 18 8 18 18 0 3-2 5-5 5h-6c2-8-3-17-12-17-5 0-10 3-13 8 2-9 9-14 18-14z" fill="#4cc47c" /></Tile> },
  { dot: true, node: <Tile fill="#dbe5f4"><path d="M7.500 21c0-6 5-11 11-11h23c6 0 11 5 11 11v18H7.500z" fill="#8ab4ee" /><path d="M7.500 38l16-8 12 6 17-6v15H7.500z" fill="#e6eef6" /><rect x="26" y="38" width="14" height="17" rx="3" fill="#2a2a2a" /><rect x="30" y="32" width="6" height="7" fill="#444" /></Tile> },
  { node: <Free><ellipse cx="30" cy="33" rx="26" ry="26" fill="#111" /><ellipse cx="30" cy="33" rx="24" ry="24" fill="#fbfb8a" /><circle cx="30" cy="33" r="12" fill="none" stroke="#111" strokeWidth="2.500" /><circle cx="30" cy="33" r="8" fill="#fbfb8a" stroke="#111" strokeWidth="1.500" /><path d="M12 14l6 10-9 0zM48 52l-6-10 9 0z" fill="#111" /></Free> },
  { node: <Tile fill="#3f8cf5"><rect x="14" y="22" width="23" height="22" rx="5" fill="#f0f6ff" /><path d="M38 30l9-6v18l-9-6z" fill="#f0f6ff" /></Tile> },
  { node: <Free><rect x="3" y="6" width="54" height="54" rx="8" fill="#111" /><path d="M3 36c10-40 20-20 26 5s18 22 28-8v6c-10 26-22 24-30 4S12 5 3 44z" fill="#8ccfc8" /><path d="M3 40c10-30 18-20 24 3s20 22 30-6v6c-10 22-22 20-28 0S12 12 3 48z" fill="#2f7f7c" /></Free> },
  { node: <Free><rect x="4" y="9" width="52" height="49" fill="#f8cd45" /><text x="30" y="47" fontSize="32" textAnchor="middle" fontWeight="bold" fill="#111" fontFamily="'Liberation Sans'">M</text></Free> },
  { node: <Free><circle cx="30" cy="33" r="28" fill="#6d2bd8" /><circle cx="30" cy="33" r="21" fill="none" stroke="#fff" strokeWidth="2.500" /><path d="M30 14l14 30H16z" fill="#fff" /><path d="M20 50l12-8M46 46l-8-6" stroke="#6d2bd8" strokeWidth="3" /></Free> },
  { node: <Free><rect x="4" y="6" width="52" height="54" rx="9" fill="#17469c" /><path d="M12 50c-1-8 3-14 8-14h20c5 0 9 6 8 14-1 3-5 2-7-1l-3-4H22l-3 4c-2 3-6 4-7 1z" fill="none" stroke="#fff" strokeWidth="2" /><circle cx="30" cy="18" r="2" fill="#fff" /><circle cx="30" cy="26" r="2" fill="#fff" /></Free> },
  { dot: true, node: <Free><rect x="7" y="10" width="46" height="46" rx="10" fill="#111" stroke="#555" strokeWidth="1.500" /><rect x="9" y="12" width="42" height="40" rx="8" fill="#222" /><path d="M14 20l6 4-6 4" fill="none" stroke="#fff" strokeWidth="1.800" /><path d="M21 31h8" stroke="#fff" strokeWidth="1.800" /></Free> },
  { sep: true, node: null },
  { dot: true, node: vscode },
  { node: vscode },
  { dot: true, node: <Free><circle cx="30" cy="33" r="26" fill="#fff" />{snippets}</Free> },
  { sep: true, node: null },
  { node: <Free><path d="M18 10h16l8 9H18z" fill="#e8e8e8" /><path d="M6 19c0-3 2-5 5-5h10l3 5h25c3 0 5 2 5 5v29c0 2-2 4-4 4H10c-2 0-4-2-4-4z" fill="#5aa8e0" /><path d="M6 27h48v26c0 2-2 4-4 4H10c-2 0-4-2-4-4z" fill="#7cc2f0" /></Free> },
  { node: <Free><rect x="1" y="11" width="56" height="38" fill="#fff" stroke="#e0e0e0" /><circle cx="46" cy="47" r="11" fill="#eee" /><circle cx="46" cy="47" r="9" fill="#3f8fe8" /><path d="M51 41l-7 5 3 2z" fill="#e8432e" /></Free> },
  { node: <Free><rect x="2" y="15" width="54" height="34" fill="#fff" stroke="#d8d8d8" /><path d="M6 22h46M6 28h46M6 34h46M6 40h30" stroke="#dcdcdc" /><rect x="36" y="36" width="16" height="22" rx="4" fill="#2f8ff0" /><path d="M47 36c-2 6-3 14-2 22h3c3 0 4-2 4-4V40c0-2-2-4-5-4z" fill="#dbe8f5" /></Free> },
  { node: <Free><path d="M8 16h44l-4 38c-1 4-5 5-18 5s-17-1-18-5z" fill="#eaeaea" stroke="#cfcfcf" /><ellipse cx="30" cy="16" rx="22" ry="5" fill="#f3f3f3" stroke="#bbb" /><path d="M14 12l8-8 5 8 6-9 4 9 7-7 2 8z" fill="#777" /><path d="M20 7l3 5M33 6l2 6" stroke="#d44" strokeWidth="1.500" /></Free> },
];

function Dock() {
  return (
    <div className="ml-[43px] w-[2794px] h-[78px] bg-[#d6d6d6] rounded-[20px] flex pl-[5px] relative">
      {dockIcons.map((d, i) =>
        d.sep ? (
          <div key={i} className="w-[26px] shrink-0 flex justify-center pt-[10px]">
            <div className="w-[2px] h-[58px] bg-[#a8a8a8]" />
          </div>
        ) : (
          <div key={i} className="w-[59.37px] shrink-0 flex flex-col items-center">
            <div className="w-[60px] h-[66px] shrink-0">{d.node}</div>
            {d.dot && <div className="w-[6px] h-[6px] rounded-full bg-[#4a4a4a] mt-[2px]" />}
          </div>
        ),
      )}
    </div>
  );
}

export default function App() {
  return (
    <div className="w-[2880px] h-[1800px] relative overflow-hidden bg-[#181818]">
      <div className="absolute left-0 bottom-0 w-[125px] h-[120px] bg-[#6b5433]" />
      <div className="absolute left-[245px] top-[1784px] text-[24px] font-bold text-[#bdbdbd] tracking-[1px] font-['Liberation_Sans',sans-serif]">/ TIMELINE</div>
      <div className="relative">
        <MenuBar />
        <div className="h-[2px] bg-[repeating-linear-gradient(90deg,#2a1a10_0,#2a1a10_70px,#9a8470_70px,#9a8470_84px,#3c2a20_84px,#3c2a20_170px)]" />
        <div className="h-[1660px] rounded-tl-[3px] rounded-tr-[24px] rounded-b-[20px] overflow-hidden flex flex-col relative">
          <TabStrip />
          <Toolbar />
          <BookmarkBar />
          <div className="flex-1 flex min-h-0">
            <PageMock />
            <DevTools />
          </div>
          <div className="absolute left-0 right-0 bottom-0 h-[90px] bg-gradient-to-b from-transparent to-black/15" />
        </div>
        <div className="h-[2px]" />
        <Dock />
      </div>
    </div>
  );
}
